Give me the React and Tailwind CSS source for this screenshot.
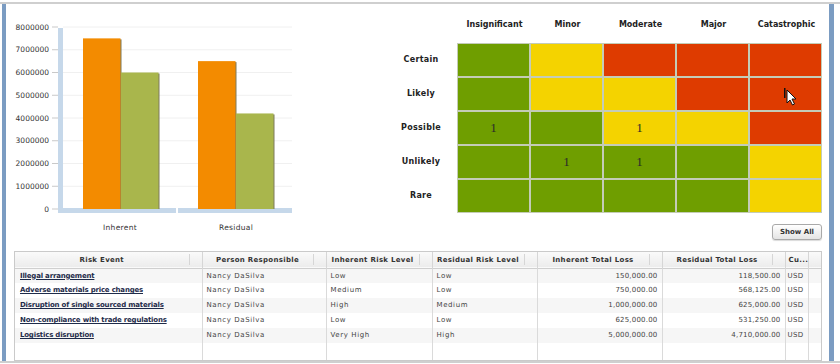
import React from 'react';

const G = 'bg-[#6f9e00]';
const Y = 'bg-[#f4d300]';
const R = 'bg-[#de3b00]';

const heat = [
  ['Certain', [[G], [Y], [R], [R], [R]]],
  ['Likely', [[G], [Y], [Y], [R], [R]]],
  ['Possible', [[G, 1], [G], [Y, 1], [Y], [R]]],
  ['Unlikely', [[G], [G, 1], [G, 1], [G], [Y]]],
  ['Rare', [[G], [G], [G], [G], [Y]]],
];

const impacts = ['Insignificant', 'Minor', 'Moderate', 'Major', 'Catastrophic'];

const rows = [
  ['Illegal arrangement', 'Low', 'Low', '150,000.00', '118,500.00'],
  ['Adverse materials price changes', 'Medium', 'Low', '750,000.00', '568,125.00'],
  ['Disruption of single sourced materials', 'High', 'Medium', '1,000,000.00', '625,000.00'],
  ['Non-compliance with trade regulations', 'Low', 'Low', '625,000.00', '531,250.00'],
  ['Logistics disruption', 'Very High', 'High', '5,000,000.00', '4,710,000.00'],
];

const cols = [
  ['Risk Event', 187],
  ['Person Responsible', 124],
  ['Inherent Risk Level', 106],
  ['Residual Risk Level', 105],
  ['Inherent Total Loss', 125],
  ['Residual Total Loss', 123],
  ['Cu...', 23],
  ['', 15],
];

function Chart() {
  const base = 209;
  const step = 22.75;
  const y = (v) => base - (v / 1000000) * step;
  const bars = [
    [83, 7500000, '#f38b00'],
    [121, 6000000, '#a9b64c'],
    [198, 6500000, '#f38b00'],
    [236, 4200000, '#a9b64c'],
  ];
  return (
    <svg width="294" height="247" viewBox="6 4 294 247" className="shrink-0">
      {[1, 2, 3, 4, 5, 6, 7, 8].map((k) => (
        <line key={k} x1="63" x2="292" y1={base - k * step} y2={base - k * step} stroke="#f0f0f0" strokeWidth="1" />
      ))}
      {[0, 1, 2, 3, 4, 5, 6, 7, 8].map((k) => (
        <g key={k}>
          <line x1="52" x2="58" y1={base - k * step} y2={base - k * step} stroke="#c9c9c9" strokeWidth="1" />
          <text x="49" y={base - k * step + 2.5} textAnchor="end" fontSize="7.5" fill="#333" fontFamily="DejaVu Sans, sans-serif">
            {k * 1000000}
          </text>
        </g>
      ))}
      <rect x="58" y="28" width="5" height="185" fill="#c6d8ea" />
      <rect x="63" y="208" width="113" height="5" fill="#c6d8ea" />
      <rect x="178" y="208" width="114" height="5" fill="#c6d8ea" />
      {bars.map(([x, v, c], i) => (
        <g key={i}>
          <rect x={x + 1.5} y={y(v) + 1} width="37" height={base - y(v) - 1} fill="#7d7a5c" />
          <rect x={x} y={y(v)} width="37.5" height={base - y(v)} fill={c} />
        </g>
      ))}
      <text x="120" y="230" textAnchor="middle" fontSize="7.5" letterSpacing="0.3" fill="#333" fontFamily="DejaVu Sans, sans-serif">Inherent</text>
      <text x="236" y="230" textAnchor="middle" fontSize="7.5" letterSpacing="0.3" fill="#333" fontFamily="DejaVu Sans, sans-serif">Residual</text>
    </svg>
  );
}

function HeatMap() {
  return (
    <div className="ml-[85px] pt-[16px] flex flex-col">
      <div className="flex h-[23px] pl-[73px]">
        {impacts.map((t) => (
          <div key={t} className="w-[73px] text-center text-[8px] leading-[10px] font-bold text-[#222]">{t}</div>
        ))}
      </div>
      <div className="flex">
        <div className="w-[72px] flex flex-col gap-[2px] pt-[1px]">
          {heat.map(([label]) => (
            <div key={label} className="h-[32px] flex items-center justify-center text-[8px] font-bold text-[#222] tracking-[0.3px]">{label}</div>
          ))}
        </div>
        <div className="bg-[#c4ccb6] p-[1px] grid grid-cols-5 gap-[2px]">
          {heat.map(([label, cells]) =>
            cells.map(([c, n], i) => (
              <div key={label + i} className={`${c} w-[71px] h-[32px] flex items-center justify-center font-['Liberation_Serif',serif] text-[13px] text-[#2a2a2a]`}>
                {n || ''}
              </div>
            ))
          )}
        </div>
      </div>
    </div>
  );
}

export default function App() {
  return (
    <div className="relative w-[840px] h-[364px] bg-white overflow-hidden font-['DejaVu_Sans',sans-serif]">
      <div className="h-[2px] mt-[2px] bg-[#cfcfcf]" />
      <div className="flex h-[357px]">
        <div className="w-[2px]" />
        <div className="w-[4px] bg-[#7b9cc2]" />
        <div className="w-[823px] flex flex-col">
          <div className="h-[247px] flex">
            <Chart />
            <div className="flex-1 flex flex-col">
              <HeatMap />
              <div className="flex justify-end mr-[7px] mt-[11px]">
                <button className="w-[50px] h-[16px] rounded-[3px] border border-[#a9a9a9] bg-gradient-to-b from-white to-[#e4e4e4] text-[7px] font-bold text-[#333] shadow-[0_1px_1px_rgba(0,0,0,0.15)]">
                  Show All
                </button>
              </div>
            </div>
          </div>
          <div className="ml-[8px] w-[808px] h-[110px] border border-[#cacaca] overflow-hidden">
            <table className="table-fixed border-collapse w-[806px] text-[7px] text-[#444]">
              <colgroup>
                {cols.map(([t, w], i) => (
                  <col key={i} style={{ width: w }} />
                ))}
              </colgroup>
              <thead>
                <tr className="h-[16px] bg-gradient-to-b from-[#fafafa] to-[#ececec] border-b border-[#cfcfcf]">
                  {cols.map(([t], i) => (
                    <th key={i} className="p-0 border-r border-[#d6d6d6] font-bold text-[#333] tracking-[0.3px]">
                      <div className="flex items-center h-[15px]">
                        <span className={`flex-1 whitespace-nowrap ${i === 6 ? 'text-left pl-[3px]' : 'text-center'}`}>{t}</span>
                        {i < 7 && <span className={`${i === 6 ? 'w-[4px]' : 'w-[13px]'} h-[11px] border-l border-[#d6d6d6]`} />}
                      </div>
                    </th>
                  ))}
                </tr>
              </thead>
              <tbody>
                {rows.map((r, i) => (
                  <tr key={i} className={`h-[15px] ${i % 2 === 0 ? 'bg-[#f6f6f6]' : 'bg-white'}`}>
                    <td className="pl-[5px] border-r border-[#dadada] font-bold text-[#1e2b4a] underline whitespace-nowrap tracking-[-0.2px]">{r[0]}</td>
                    <td className="pl-[4px] border-r border-[#dadada] tracking-[0.6px]">Nancy DaSilva</td>
                    <td className="pl-[4px] border-r border-[#dadada] tracking-[0.6px]">{r[1]}</td>
                    <td className="pl-[4px] border-r border-[#dadada] tracking-[0.6px]">{r[2]}</td>
                    <td className="pr-[4px] text-right border-r border-[#dadada] tracking-[0.2px]">{r[3]}</td>
                    <td className="pr-[4px] text-right border-r border-[#dadada] tracking-[0.2px]">{r[4]}</td>
                    <td className="pl-[2px] border-r border-[#dadada] tracking-[0.4px]">USD</td>
                    <td />
                  </tr>
                ))}
                <tr className="h-[18px]">
                  {cols.map((c, i) => (
                    <td key={i} className={i < 7 ? 'border-r border-[#dadada]' : ''} />
                  ))}
                </tr>
              </tbody>
            </table>
          </div>
        </div>
        <div className="w-[5px] bg-[#7b9cc2]" />
        <div className="flex-1 bg-white" />
      </div>
      <div className="h-[2px] bg-[#cfcfcf]" />
      <svg className="absolute left-[784px] top-[88px]" width="14" height="20" viewBox="0 0 14 20">
        <rect x="0" y="0" width="1.5" height="10" fill="#111" />
        <path d="M3 2 L3 15 L6 12 L8.5 17 L10.5 16 L8 11 L12 11 Z" fill="#fff" stroke="#111" strokeWidth="1" />
      </svg>
    </div>
  );
}
